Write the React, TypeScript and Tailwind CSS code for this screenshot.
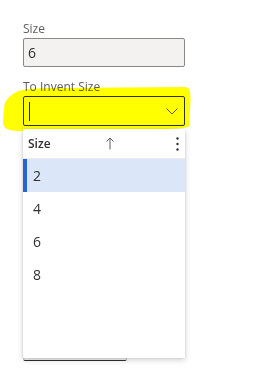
import React from 'react';

const sizes = [2, 4, 6, 8];

const Chevron = () => (
  <svg width="12" height="7" viewBox="0 0 12 7" fill="none">
    <path d="M0.5 0.5 L6 6 L11.5 0.5" stroke="#605e5c" strokeWidth="1" />
  </svg>
);

const UpArrow = () => (
  <svg width="8" height="13" viewBox="0 0 8 13" fill="none">
    <path d="M4 12.5 V1 M0.5 4.5 L4 1 L7.5 4.5" stroke="#605e5c" strokeWidth="1" />
  </svg>
);

const MoreDots = () => (
  <svg width="3" height="14" viewBox="0 0 3 14" fill="#323130">
    <circle cx="1.5" cy="1.5" r="1.2" />
    <circle cx="1.5" cy="7" r="1.2" />
    <circle cx="1.5" cy="12.5" r="1.2" />
  </svg>
);

const Highlight = () => (
  <svg
    className="absolute left-0 top-[86px] mix-blend-multiply pointer-events-none"
    width="194"
    height="48"
    viewBox="0 86 194 48"
  >
    <path
      d="M12 95 C18 89 30 88 60 88 L186 87 C191 88 191 96 190 110 L189 126 C186 130 150 129 100 130 L22 131 C9 131 3 129 3 122 L4 108 C5 100 8 98 12 95 Z"
      fill="#ffff00"
    />
  </svg>
);

export default function App() {
  return (
    <div
      className="relative w-[258px] h-[374px] bg-white overflow-hidden"
      style={{ fontFamily: '"Segoe UI", "Open Sans", sans-serif' }}
    >
      <div className="flex flex-col pl-[23px] pt-[21px] w-[185px]">
        <label className="text-[12px] leading-[16px] text-[#605e5c]">Size</label>
        <div className="mt-[1px] h-[29px] border border-[#8a8886] bg-[#f3f2f1] rounded-[2px] flex items-center px-[4px] text-[14px] text-[#323130]">
          6
        </div>
        <label className="mt-[12px] text-[12px] leading-[16px] text-[#605e5c]">To Invent Size</label>
        <div className="mt-[1px] h-[30px] border border-[#323130] bg-white rounded-[2px] flex items-center justify-between pl-[5px] pr-[6px]">
          <div className="w-[1px] h-[19px] bg-[#201f1e]" />
          <Chevron />
        </div>
        <div className="mt-[203px] w-[104px] h-[32px] border border-[#c8c6c4] border-b-[#323130] rounded-[2px] bg-[#f3f2f1]" />
      </div>

      <Highlight />

      <div className="absolute left-[23px] top-[129px] w-[162px] h-[229px] bg-white shadow-[0_2px_6px_rgba(0,0,0,0.18),0_0_2px_rgba(0,0,0,0.12)] flex flex-col">
        <div className="h-[30px] flex items-center pl-[5px] pr-[6px] border-b border-[#edebe9] text-[12px] text-[#323130] font-semibold">
          <span className="w-[78px]">Size</span>
          <UpArrow />
          <span className="flex-1" />
          <MoreDots />
        </div>
        {sizes.map((s, i) => (
          <div
            key={s}
            className={
              i === 0
                ? 'h-[33px] flex items-center bg-[#dbe6f8] border-l-[4px] border-[#2563db] pl-[6px] text-[14px] text-[#323130]'
                : 'h-[33px] flex items-center pl-[10px] text-[14px] text-[#323130]'
            }
          >
            {s}
          </div>
        ))}
      </div>
    </div>
  );
}
